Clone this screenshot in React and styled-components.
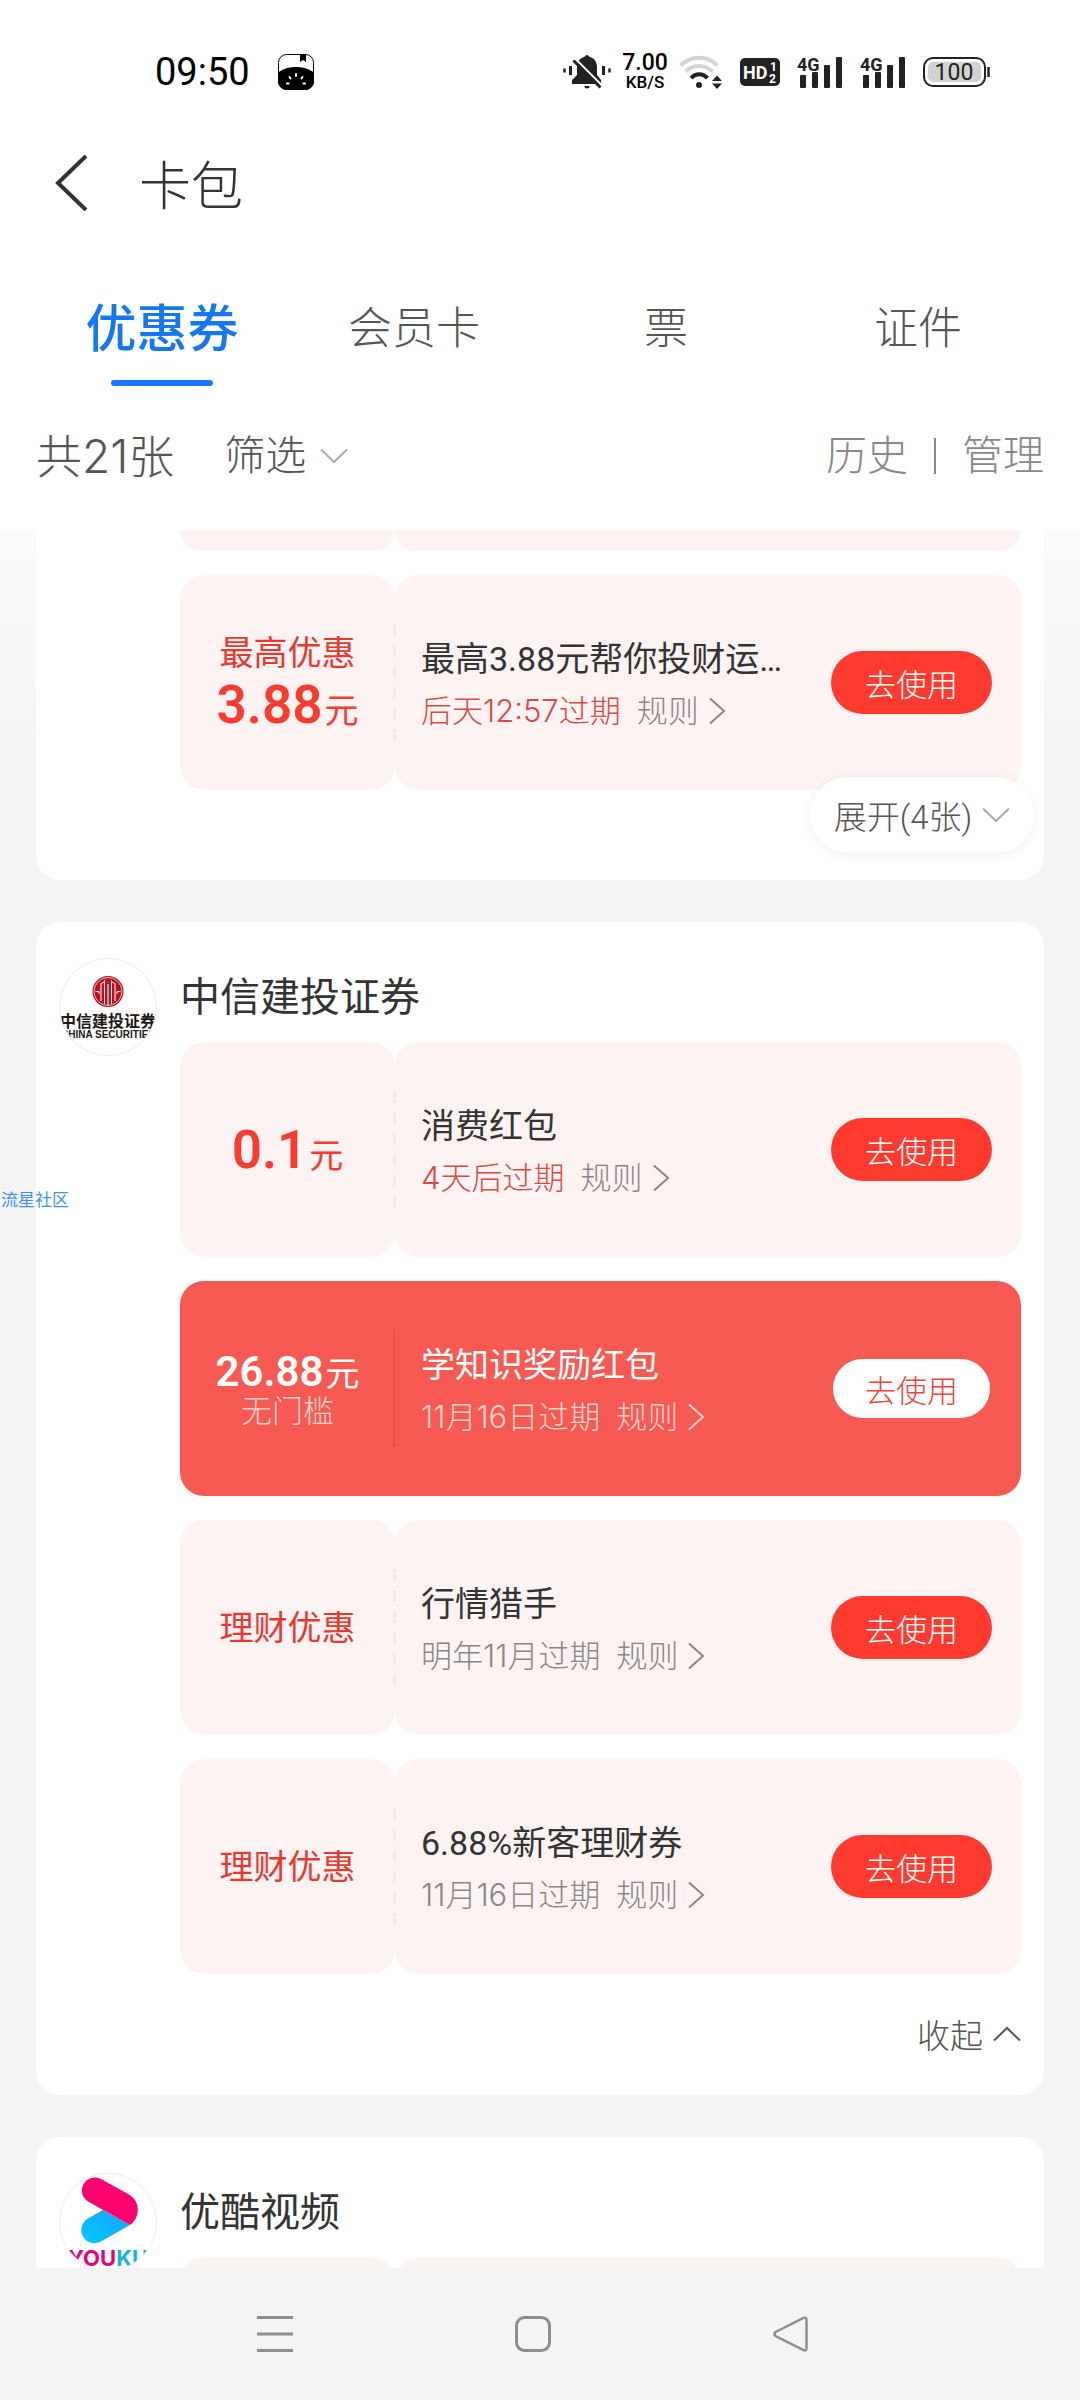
import React, { useState } from "react";
import styled, { createGlobalStyle } from "styled-components";

const GlobalStyle = createGlobalStyle`
  * {
    box-sizing: border-box;
  }
  body {
    margin: 0;
    background: #f4f4f4;
    color: #333;
    font-family: Roboto, "Noto Sans CJK SC", sans-serif;
    font-weight: 300;
  }
  button {
    margin: 0;
    padding: 0;
    border: 0;
    background: none;
    color: inherit;
    font: inherit;
    cursor: pointer;
  }
  svg {
    display: block;
    flex: none;
  }
`;

const Page = styled.div`
  position: relative;
  display: flex;
  flex-direction: column;
  height: 100vh;
  overflow: hidden;
`;

/* ---------- status bar ---------- */

const StatusBar = styled.div`
  display: flex;
  align-items: center;
  justify-content: space-between;
  height: 144px;
  padding: 0 90px 0 155px;
  background: #fff;
`;

const StatusGroup = styled.div`
  display: flex;
  align-items: center;
  gap: ${(props) => props.$gap}px;
`;

const Clock = styled.time`
  color: #000;
  font-size: 38px;
  font-weight: 400;
`;

const NetSpeed = styled.div`
  width: 48px;
  color: #000;
  font-size: 23px;
  font-weight: 500;
  line-height: 20px;
  text-align: center;
`;

const NetUnit = styled.div`
  font-size: 17px;
  line-height: 18px;
`;

/* ---------- header ---------- */

const Header = styled.header`
  display: flex;
  align-items: center;
  gap: 50px;
  height: 78px;
  padding-left: 53px;
  background: #fff;
`;

const Title = styled.h1`
  margin: 0;
  font-family: "Noto Sans CJK SC", sans-serif;
  font-size: 52px;
  font-weight: 300;
  line-height: 80px;
`;

const Tabs = styled.nav`
  display: grid;
  grid-template-columns: repeat(4, 1fr);
  padding: 73px 36px 0;
  background: #fff;
`;

const Tab = styled.button`
  display: flex;
  flex-direction: column;
  align-items: center;
  gap: 25px;
  color: ${(props) => (props.$active ? "#1677f2" : "#555")};
  font-family: "Noto Sans CJK SC", sans-serif;
  font-size: ${(props) => (props.$active ? 51 : 44)}px;
  font-weight: ${(props) => (props.$active ? 500 : 300)};
  line-height: 60px;

  &::after {
    content: "";
    width: 102px;
    height: 6px;
    border-radius: 3px;
    background: ${(props) => (props.$active ? "#1677ff" : "transparent")};
  }
`;

const FilterBar = styled.div`
  display: flex;
  align-items: center;
  justify-content: space-between;
  height: 144px;
  padding: 0 36px 4px;
  background: #fff;
  color: #555;
  line-height: 60px;
`;

const FilterGroup = styled.div`
  display: flex;
  align-items: center;
  gap: ${(props) => props.$gap}px;
  color: ${(props) => props.$color};
  font-size: 41px;
`;

const Count = styled.span`
  font-family: Inter, "Noto Sans CJK SC", sans-serif;
  font-size: 46px;
`;

const FilterButton = styled.button`
  display: flex;
  align-items: center;
  gap: 14px;
`;

const Divider = styled.span`
  width: 2px;
  height: 36px;
  background: #888;
`;

/* ---------- card list ---------- */

const List = styled.main`
  display: flex;
  flex: 1;
  flex-direction: column;
  gap: 42px;
  min-height: 0;
  padding: 0 36px;
  overflow-y: auto;
  scrollbar-width: none;
  background: linear-gradient(#fbfbfb, #f4f4f4 250px);
`;

const Card = styled.section`
  display: flex;
  flex: none;
  gap: 23px;
  padding: ${(props) => (props.$cut ? 0 : 36)}px 23px 0;
  border-radius: ${(props) => (props.$cut ? "0 0 24px 24px" : "24px")};
  background: #fff;
`;

const LogoSlot = styled.div`
  flex: none;
  width: 98px;
`;

const CardBody = styled.div`
  display: flex;
  flex: 1;
  flex-direction: column;
  min-width: 0;
`;

const Merchant = styled.h2`
  margin: 0 0 12px;
  font-family: "Noto Sans CJK SC", sans-serif;
  font-size: 40px;
  font-weight: 400;
  line-height: 72px;
`;

const Coupons = styled.div`
  display: flex;
  flex-direction: column;
  gap: 24px;
`;

const Coupon = styled.article`
  position: relative;
  display: grid;
  grid-template-columns: 215px 1fr;
  height: 215px;
  border-radius: 24px;
  background: ${(props) => (props.$solid ? "#f65a52" : "transparent")};

  &::after {
    content: "";
    position: absolute;
    top: 49px;
    left: 213px;
    width: ${(props) => (props.$solid ? 2 : 3)}px;
    height: 117px;
    background: ${(props) =>
      props.$solid
        ? "#e8504a"
        : "repeating-linear-gradient(#f5e8e9 0 12px, transparent 12px 21px)"};
  }
`;

const Panel = styled.div`
  border-radius: 24px;
  background: ${(props) => (props.$solid ? "transparent" : "#fef3f3")};
`;

const ValuePanel = styled(Panel)`
  display: flex;
  flex-direction: column;
  align-items: center;
  justify-content: center;
  padding-top: ${(props) => (props.$solid ? 4 : 0)}px;
  color: ${(props) => (props.$solid ? "#fff" : "#e8382f")};
`;

const InfoPanel = styled(Panel)`
  display: flex;
  align-items: center;
  justify-content: space-between;
  padding: 0 29px 0 26px;
`;

const ValueLabel = styled.div`
  font-size: 34px;
  font-weight: 400;
  line-height: 44px;
`;

const Amount = styled.div`
  margin-bottom: ${(props) => (props.$solid ? -4 : -6)}px;
  color: ${(props) => (props.$solid ? "#fff" : "#fb3a30")};
  font-size: ${(props) => (props.$solid ? 42 : 53)}px;
  font-weight: 600;
  line-height: ${(props) => (props.$solid ? 44 : 60)}px;
`;

const Unit = styled.span`
  margin-left: 2px;
  font-size: 34px;
  font-weight: 400;
`;

const ValueNote = styled.div`
  color: #fcd0cd;
  font-size: 31px;
  line-height: 40px;
`;

const Info = styled.div`
  display: flex;
  flex-direction: column;
  gap: 6px;
  min-width: 0;
  padding-top: 2px;
  white-space: nowrap;
`;

const CouponTitle = styled.h3`
  margin: 0;
  color: ${(props) => (props.$solid ? "#fff" : "#333")};
  font-size: 34px;
  font-weight: 400;
  line-height: 48px;
`;

const tones = { soon: "#dc4a44", later: "#888", solid: "#fdd3d0" };

const Meta = styled.div`
  display: flex;
  gap: 16px;
  color: ${(props) => tones[props.$tone]};
  font-family: Inter, "Noto Sans CJK SC", sans-serif;
  font-size: 31px;
  line-height: 44px;
`;

const RuleLink = styled.button`
  display: flex;
  align-items: center;
  gap: 9px;
  color: ${(props) => (props.$solid ? "#fdd3d0" : "#8a8586")};
`;

const UseButton = styled.button`
  flex: none;
  width: 161px;
  height: 63px;
  border: ${(props) => (props.$solid ? "2px solid #f65a52" : "0")};
  border-radius: 32px;
  background: ${(props) => (props.$solid ? "#fff" : "#ff3b30")};
  color: ${(props) => (props.$solid ? "#e8453c" : "#fff")};
  font-size: 31px;
`;

/* the visible strip of a coupon that is scrolled off the list */
const CouponEdge = styled.div`
  display: grid;
  grid-template-columns: 215px 1fr;
  height: ${(props) => (props.$tail ? 21 : 60)}px;

  span {
    border-radius: ${(props) => (props.$tail ? "0 0 24px 24px" : "24px 24px 0 0")};
    background: #fef3f3;
  }
`;

const ExpandButton = styled.button`
  position: relative;
  display: flex;
  align-items: center;
  align-self: flex-end;
  justify-content: center;
  gap: 10px;
  width: 224px;
  height: 76px;
  margin: -13px -13px 27px 0;
  border-radius: 38px;
  background: #fff;
  box-shadow: 0 2px 12px rgba(0, 0, 0, 0.06);
  color: #555;
  font-size: 33px;
`;

const CollapseButton = styled.button`
  display: flex;
  align-items: center;
  align-self: flex-end;
  gap: 10px;
  height: 121px;
  padding-bottom: 2px;
  color: #555;
  font-size: 33px;
`;

const Watermark = styled.div`
  position: absolute;
  top: 50%;
  left: 1px;
  color: #3d94ef;
  font-size: 17px;
  font-weight: 400;
  line-height: 20px;
  transform: translateY(-50%);
`;

const NavBar = styled.nav`
  display: grid;
  grid-template-columns: repeat(3, 1fr);
  flex: none;
  align-items: center;
  height: 132px;
  padding: 0 160px 0 146px;
  background: #f4f4f4;
`;

const NavButton = styled.button`
  display: flex;
  justify-content: center;
`;

/* ---------- icons ---------- */

const chevrons = {
  down: { w: 28, h: 16, d: "M1 1.5 14 14 27 1.5" },
  up: { w: 28, h: 16, d: "M1 14.5 14 2 27 14.5" },
  right: { w: 18, h: 28, d: "M2 1.5 16 14 2 26.5" },
};

function Chevron({ dir, color = "currentColor" }) {
  const { w, h, d } = chevrons[dir];
  return (
    <svg width={w} height={h} viewBox={`0 0 ${w} ${h}`} fill="none" aria-hidden="true">
      <path d={d} stroke={color} strokeWidth="2" />
    </svg>
  );
}

const AppIcon = () => (
  <svg width="36" height="36" viewBox="0 0 36 36">
    <rect x="0.5" y="0.5" width="35" height="35" rx="8" fill="#fff" stroke="#000" />
    <path d="M0 19C8 11 28 11 36 19V27A9 9 0 0 1 27 36H9A9 9 0 0 1 0 27Z" fill="#000" />
    <path d="M22 0H28V8L25 6 22 8Z" fill="#000" />
    <path
      d="M18 20V22M11.500 23 12.500 24.500M24.500 23 23.500 24.500M9 29.500H10.500M25.500 29.500H27"
      stroke="#fff"
      strokeWidth="2"
      strokeLinecap="round"
    />
  </svg>
);

const BellOff = () => (
  <svg width="48" height="34" viewBox="0 0 48 34">
    <path
      d="M24 0a2.5 2.5 0 0 1 2 1.6C31 3 34 7 34 12v8l4 5v4H9v-4l5-5v-8c0-5 3-9 8-10.400A2.500 2.500 0 0 1 24 0Z"
      fill="#222"
    />
    <path d="M21.500 31h5a2.500 2.500 0 0 1-5 0Z" fill="#222" />
    <path d="M12 3.500 39 30.500" stroke="#fff" strokeWidth="2" />
    <path d="M10.500 5.500 37.500 32.500" stroke="#222" strokeWidth="3" />
    <path d="M7.500 11v9M40.500 11v9" stroke="#222" strokeWidth="3" />
    <path d="M1.500 13.500v4M46.500 13.500v4" stroke="#222" strokeWidth="2.500" />
  </svg>
);

const Wifi = () => (
  <svg width="44" height="34" viewBox="0 0 44 34" fill="none">
    <path d="M1.500 10.500C12 0 28 0 38.500 10.500" stroke="#d4d4d4" strokeWidth="4" />
    <path d="M6.500 16.500C14 9 26 9 33.500 16.500" stroke="#d4d4d4" strokeWidth="4" />
    <path d="M12 23C17 18 23.500 18 28.500 23" stroke="#222" strokeWidth="4" />
    <circle cx="20" cy="30" r="3" fill="#222" />
    <path d="M38 20.500 43 26H33ZM38 34 33 28.500H43Z" fill="#222" />
  </svg>
);

const HdBadge = () => (
  <svg width="40" height="28" viewBox="0 0 40 28" fontFamily="Roboto, sans-serif" fontWeight="700">
    <rect width="40" height="28" rx="5" fill="#222" />
    <text x="3" y="21" fill="#fff" fontSize="18">
      HD
    </text>
    <text x="30" y="13" fill="#fff" fontSize="12">
      1
    </text>
    <text x="29" y="25" fill="#fff" fontSize="12">
      2
    </text>
  </svg>
);

const Signal = () => (
  <svg width="46" height="34" viewBox="0 0 46 34">
    <text x="0" y="16" fill="#222" fontSize="18" fontWeight="700" fontFamily="Roboto, sans-serif">
      4G
    </text>
    <rect x="3" y="20" width="6" height="13" rx="1" fill="#222" />
    <rect x="15" y="17" width="6" height="16" rx="1" fill="#222" />
    <rect x="27" y="10" width="6" height="23" rx="1" fill="#222" />
    <rect x="39" y="2" width="6" height="31" rx="1" fill="#222" />
  </svg>
);

const Battery = () => (
  <svg width="67" height="30" viewBox="0 0 67 30">
    <rect x="1" y="1" width="61" height="28" rx="9" fill="#fff" stroke="#222" strokeWidth="2" />
    <rect x="5" y="5" width="53" height="20" rx="5" fill="#d2d2d2" />
    <path d="M65.500 10v10" stroke="#222" strokeWidth="2.500" />
    <text
      x="31"
      y="23"
      fill="#222"
      fontSize="23"
      fontWeight="400"
      textAnchor="middle"
      fontFamily="Roboto, sans-serif"
    >
      100
    </text>
  </svg>
);

const CiticLogo = () => (
  <svg width="98" height="98" viewBox="0 0 98 98" role="img" aria-label="中信建投证券">
    <clipPath id="citic">
      <circle cx="49" cy="49" r="48" />
    </clipPath>
    <circle cx="49" cy="49" r="48.500" fill="#fff" stroke="#ececec" />
    <g clipPath="url(#citic)" fill="#231815" fontWeight="700" textAnchor="middle">
      <circle cx="49" cy="33.500" r="15.500" fill="#b8141f" />
      <circle cx="49" cy="33.500" r="14" fill="none" stroke="#fff" strokeWidth="0.700" />
      <path
        d="M45.500 24V46M52.500 24V46M49 26V47M42.500 25C45.500 25 45.500 23 45.500 22M55.500 25C52.500 25 52.500 23 52.500 22M42 25V43M56 25V43M36.500 33.500H40V36M61.500 33.500H58V36"
        fill="none"
        stroke="#fff"
        strokeWidth="1"
      />
      <text x="49" y="69" fontSize="16" fontFamily='"Noto Sans CJK SC", sans-serif'>
        中信建投证券
      </text>
      <text x="49" y="80" fontSize="10" fontFamily='"Liberation Sans", sans-serif'>
        CHINA SECURITIES
      </text>
    </g>
  </svg>
);

const YoukuLogo = () => (
  <svg width="98" height="98" viewBox="0 0 98 98" role="img" aria-label="YOUKU">
    <defs>
      <clipPath id="youku">
        <circle cx="49" cy="49" r="48" />
      </clipPath>
      <linearGradient id="youkuBlue" x1="1" y1="0" x2="0" y2="1">
        <stop offset="0" stopColor="#1aa3ff" />
        <stop offset="1" stopColor="#00c8ff" />
      </linearGradient>
    </defs>
    <circle cx="49" cy="49" r="48.500" fill="#fff" stroke="#ececec" />
    <g clipPath="url(#youku)">
      <path d="M44 37 71 52 42 68.500A13 13 0 0 1 29 45.500Z" fill="url(#youkuBlue)" />
      <path d="M42 6 70 21.500C81 28 82 44 71 52L29 28.500A13 13 0 0 1 42 6Z" fill="#ff0071" />
      <text x="49" y="93" fontSize="22" fontWeight="700" textAnchor="middle" fontFamily="Inter, sans-serif">
        <tspan fill="#e3007d">YOU</tspan>
        <tspan fill="#12b5dd">KU</tspan>
      </text>
    </g>
  </svg>
);

/* ---------- data ---------- */

const tabs = ["优惠券", "会员卡", "票", "证件"];

const wealthCoupons = [
  {
    id: 1,
    label: "最高优惠",
    amount: "3.88",
    title: "最高3.88元帮你投财运…",
    expiry: "后天12:57过期",
    tone: "soon",
  },
];

const citicCoupons = [
  { id: 2, amount: "0.1", title: "消费红包", expiry: "4天后过期", tone: "soon" },
  {
    id: 3,
    amount: "26.88",
    note: "无门槛",
    title: "学知识奖励红包",
    expiry: "11月16日过期",
    tone: "solid",
  },
  { id: 4, label: "理财优惠", title: "行情猎手", expiry: "明年11月过期", tone: "later" },
  { id: 5, label: "理财优惠", title: "6.88%新客理财券", expiry: "11月16日过期", tone: "later" },
];

function CouponItem({ coupon }) {
  const solid = coupon.tone === "solid";
  return (
    <Coupon $solid={solid}>
      <ValuePanel $solid={solid}>
        {coupon.label && <ValueLabel>{coupon.label}</ValueLabel>}
        {coupon.amount && (
          <Amount $solid={solid}>
            {coupon.amount}
            <Unit>元</Unit>
          </Amount>
        )}
        {coupon.note && <ValueNote>{coupon.note}</ValueNote>}
      </ValuePanel>
      <InfoPanel $solid={solid}>
        <Info>
          <CouponTitle $solid={solid}>{coupon.title}</CouponTitle>
          <Meta $tone={coupon.tone}>
            <span>{coupon.expiry}</span>
            <RuleLink type="button" $solid={solid}>
              规则
              <Chevron dir="right" />
            </RuleLink>
          </Meta>
        </Info>
        <UseButton type="button" $solid={solid}>
          去使用
        </UseButton>
      </InfoPanel>
    </Coupon>
  );
}

export default function App() {
  const [active, setActive] = useState(tabs[0]);

  return (
    <Page>
      <GlobalStyle />
      <StatusBar>
        <StatusGroup $gap={28}>
          <Clock>09:50</Clock>
          <AppIcon />
        </StatusGroup>
        <StatusGroup $gap={17}>
          <StatusGroup $gap={10}>
            <BellOff />
            <NetSpeed>
              7.00
              <NetUnit>KB/S</NetUnit>
            </NetSpeed>
            <Wifi />
          </StatusGroup>
          <HdBadge />
          <Signal />
          <Signal />
          <Battery />
        </StatusGroup>
      </StatusBar>

      <Header>
        <button type="button" aria-label="返回">
          <svg width="36" height="56" viewBox="0 0 36 56" fill="none">
            <path d="M33 1 5 28 33 55" stroke="#333" strokeWidth="4" />
          </svg>
        </button>
        <Title>卡包</Title>
      </Header>

      <Tabs>
        {tabs.map((tab) => (
          <Tab key={tab} type="button" $active={tab === active} onClick={() => setActive(tab)}>
            {tab}
          </Tab>
        ))}
      </Tabs>

      <FilterBar>
        <FilterGroup $gap={50} $color="#555">
          <Count>共21张</Count>
          <FilterButton type="button">
            筛选
            <Chevron dir="down" color="#aaa" />
          </FilterButton>
        </FilterGroup>
        <FilterGroup $gap={26} $color="#888">
          <button type="button">历史</button>
          <Divider />
          <button type="button">管理</button>
        </FilterGroup>
      </FilterBar>

      <List>
        <Card $cut>
          <LogoSlot />
          <CardBody>
            <Coupons>
              <CouponEdge $tail>
                <span />
                <span />
              </CouponEdge>
              {wealthCoupons.map((coupon) => (
                <CouponItem key={coupon.id} coupon={coupon} />
              ))}
            </Coupons>
            <ExpandButton type="button">
              展开(4张)
              <Chevron dir="down" color="#aaa" />
            </ExpandButton>
          </CardBody>
        </Card>

        <Card>
          <LogoSlot>
            <CiticLogo />
          </LogoSlot>
          <CardBody>
            <Merchant>中信建投证券</Merchant>
            <Coupons>
              {citicCoupons.map((coupon) => (
                <CouponItem key={coupon.id} coupon={coupon} />
              ))}
            </Coupons>
            <CollapseButton type="button">
              收起
              <Chevron dir="up" />
            </CollapseButton>
          </CardBody>
        </Card>

        <Card>
          <LogoSlot>
            <YoukuLogo />
          </LogoSlot>
          <CardBody>
            <Merchant>优酷视频</Merchant>
            <CouponEdge>
              <span />
              <span />
            </CouponEdge>
          </CardBody>
        </Card>
      </List>

      <NavBar>
        <NavButton type="button" aria-label="最近任务">
          <svg width="36" height="36" viewBox="0 0 36 36" fill="none">
            <path d="M0 1.500H36M0 18H36M0 34.500H36" stroke="#8e8e8e" strokeWidth="3" />
          </svg>
        </NavButton>
        <NavButton type="button" aria-label="主屏幕">
          <svg width="36" height="36" viewBox="0 0 36 36" fill="none">
            <rect x="1.500" y="1.500" width="33" height="33" rx="8" stroke="#8e8e8e" strokeWidth="3" />
          </svg>
        </NavButton>
        <NavButton type="button" aria-label="返回上一级">
          <svg width="36" height="36" viewBox="0 0 36 36" fill="none">
            <path
              d="M2.500 16 30.500 1.800Q33.500 1 33.500 4V32Q33.500 35 30.500 34.200L2.500 20Q0.500 18 2.500 16Z"
              stroke="#8e8e8e"
              strokeWidth="2.500"
            />
          </svg>
        </NavButton>
      </NavBar>

      <Watermark>流星社区</Watermark>
    </Page>
  );
}
